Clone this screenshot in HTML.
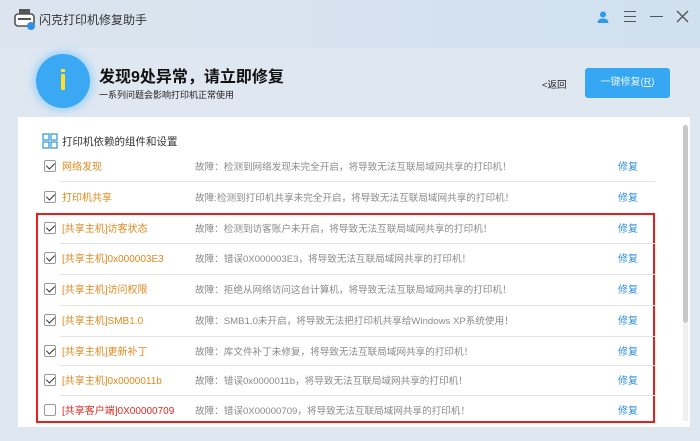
<!DOCTYPE html>
<html><head><meta charset="utf-8"><style>
*{margin:0;padding:0;box-sizing:border-box}
body{width:700px;height:441px;overflow:hidden;background:#dfe7f1;font-family:"Liberation Sans","Noto Sans CJK SC",sans-serif;position:relative}
.tb{position:absolute;left:0;top:0;width:700px;height:48px;background:linear-gradient(90deg,#dce5ef,#d0e0ef)}
.abs{position:absolute}
.panel{position:absolute;left:18px;top:117px;width:672px;height:310px;background:#fff}
.row{position:absolute;left:0;width:672px;height:20px;font-size:10px;line-height:23px}
.err{font-size:9.6px}
.cb{position:absolute;left:26px;top:4px;width:12px;height:12px;border:1px solid #999;border-radius:2px;background:#fff}
.cb.on::after{content:"";position:absolute;left:3px;top:0px;width:4px;height:7px;border:solid #333;border-width:0 1.6px 1.6px 0;transform:rotate(45deg)}
.lab{position:absolute;left:44px;color:#e08a1e}
.err{position:absolute;left:177px;color:#8a8a8a}
.fix{position:absolute;left:600px;color:#2f8fe0}
.sep{position:absolute;left:42px;width:595px;height:1px;background:#e4e4e4}
</style></head><body>
<div class="tb"></div>
<svg class="abs" style="left:14px;top:8px" width="22" height="22" viewBox="0 0 22 22"><rect x="5" y="1" width="11" height="5" fill="#555"/><rect x="1" y="6" width="19" height="12" rx="3" fill="#fff" stroke="#555" stroke-width="1.6"/><rect x="4" y="10" width="13" height="2" fill="#555"/><circle cx="17" cy="18" r="4" fill="#2f8fe0"/></svg>
<div class="abs" style="left:39px;top:11px;font-size:12px;color:#333">闪克打印机修复助手</div>
<svg class="abs" style="left:596px;top:10px" width="14" height="14" viewBox="0 0 14 14"><circle cx="7" cy="4.5" r="3" fill="#2f9be8"/><path d="M1.5 13 Q1.5 8.5 7 8.5 Q12.5 8.5 12.5 13Z" fill="#2f9be8"/></svg>
<div class="abs" style="left:624px;top:11px;width:12px;height:11px;border-top:1.3px solid #555;border-bottom:1.3px solid #555"></div>
<div class="abs" style="left:624px;top:16px;width:12px;height:1.3px;background:#555"></div>
<div class="abs" style="left:650px;top:16px;width:13px;height:1.3px;background:#555"></div>
<svg class="abs" style="left:676px;top:10px" width="13" height="13"><path d="M1 1L12 12M12 1L1 12" stroke="#555" stroke-width="1.4"/></svg>
<div class="abs" style="left:36px;top:54px;width:54px;height:54px;border-radius:50%;background:#3aa8f2;box-shadow:0 0 8px 3px #9fd3f7"></div>
<div class="abs" style="left:61px;top:69px;width:4px;height:3px;background:#ffe02a"></div>
<div class="abs" style="left:61px;top:74px;width:4px;height:16px;background:#ffe02a;border-radius:1px"></div>
<div class="abs" style="left:99px;top:63px;font-size:16px;font-weight:bold;color:#111">发现9处异常，请立即修复</div>
<div class="abs" style="left:99px;top:88px;font-size:9px;color:#222">一系列问题会影响打印机正常使用</div>
<div class="abs" style="left:542px;top:77px;font-size:9.5px;color:#222">&lt;返回</div>
<div class="abs" style="left:585px;top:68px;width:85px;height:30px;background:#36a7f2;border-radius:3px;color:#e8f4ff;font-size:10px;text-align:center;line-height:30px">一键修复(<u>R</u>)</div>
<div class="panel">
<svg class="abs" style="left:24px;top:16px" width="16" height="16" viewBox="0 0 16 16" fill="none" stroke="#3a9bd8" stroke-width="1.3"><rect x="1" y="1" width="6" height="6"/><rect x="9" y="1" width="6" height="6"/><rect x="1" y="9" width="6" height="6"/><rect x="9" y="9" width="6" height="6"/></svg>
<div class="abs" style="left:44px;top:17px;font-size:10.5px;color:#333">打印机依赖的组件和设置</div>
<div class="row" style="top:39px"><div class="cb on"></div><div class="lab">网络发现</div><div class="err">故障：检测到网络发现未完全开启，将导致无法互联局域网共享的打印机！</div><div class="fix">修复</div></div>
<div class="sep" style="top:64px"></div>
<div class="row" style="top:70px"><div class="cb on"></div><div class="lab">打印机共享</div><div class="err">故障:检测到打印机共享未完全开启，将导致无法互联局域网共享的打印机！</div><div class="fix">修复</div></div>
<div class="abs" style="left:18px;top:96px;width:619px;height:210px;border:2px solid #e8201c"></div>
<div class="row" style="top:101px"><div class="cb on"></div><div class="lab">[共享主机]访客状态</div><div class="err">故障：检测到访客账户未开启，将导致无法互联局域网共享的打印机！</div><div class="fix">修复</div></div>
<div class="sep" style="top:126px"></div>
<div class="row" style="top:131px"><div class="cb on"></div><div class="lab">[共享主机]0x000003E3</div><div class="err">故障：错误0X000003E3，将导致无法互联局域网共享的打印机！</div><div class="fix">修复</div></div>
<div class="sep" style="top:157px"></div>
<div class="row" style="top:162px"><div class="cb on"></div><div class="lab">[共享主机]访问权限</div><div class="err">故障：拒绝从网络访问这台计算机，将导致无法互联局域网共享的打印机！</div><div class="fix">修复</div></div>
<div class="sep" style="top:188px"></div>
<div class="row" style="top:193px"><div class="cb on"></div><div class="lab">[共享主机]SMB1.0</div><div class="err">故障：SMB1.0未开启，将导致无法把打印机共享给Windows XP系统使用！</div><div class="fix">修复</div></div>
<div class="sep" style="top:219px"></div>
<div class="row" style="top:224px"><div class="cb on"></div><div class="lab">[共享主机]更新补丁</div><div class="err">故障：库文件补丁未修复，将导致无法互联局域网共享的打印机！</div><div class="fix">修复</div></div>
<div class="sep" style="top:248px"></div>
<div class="row" style="top:253px"><div class="cb on"></div><div class="lab">[共享主机]0x0000011b</div><div class="err">故障：错误0x0000011b，将导致无法互联局域网共享的打印机！</div><div class="fix">修复</div></div>
<div class="sep" style="top:278px"></div>
<div class="row" style="top:283px"><div class="cb"></div><div class="lab" style="color:#e02a20">[共享客户端]0X00000709</div><div class="err">故障：错误0X00000709，将导致无法互联局域网共享的打印机！</div><div class="fix">修复</div></div>
<div class="abs" style="left:665px;top:8px;width:5px;height:198px;background:#c8c8c8;border-radius:3px"></div>
<div class="abs" style="left:665px;top:206px;width:5px;height:98px;background:#f0f0f0"></div>
</div>
</body></html>
